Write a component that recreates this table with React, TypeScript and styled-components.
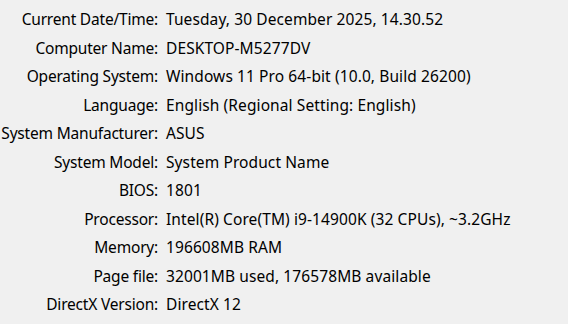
import styled, { createGlobalStyle } from "styled-components";

const GlobalStyle = createGlobalStyle`
    html, body {
        margin: 0;
        padding: 0;
        background-color: #f0f0f0;
    }
`;

const InfoGrid = styled.div`
    display: grid;
    grid-template-columns: 158px 1fr;
    column-gap: 8px;
    grid-auto-rows: 28.5px;
    align-items: center;
    padding-top: 5px;
    width: 568px;
    height: 324px;
    box-sizing: border-box;
    background-color: #f0f0f0;
    font-family: "Noto Sans", "DejaVu Sans", sans-serif;
    font-size: 15.5px;
    color: #000;
    white-space: nowrap;
`;

const Label = styled.span`
    text-align: right;
    letter-spacing: -0.2px;
`;

const Value = styled.span`
    text-align: left;
    letter-spacing: 0.1px;
`;

const rows: [string, string][] = [
    ["Current Date/Time:", "Tuesday, 30 December 2025, 14.30.52"],
    ["Computer Name:", "DESKTOP-M5277DV"],
    ["Operating System:", "Windows 11 Pro 64-bit (10.0, Build 26200)"],
    ["Language:", "English (Regional Setting: English)"],
    ["System Manufacturer:", "ASUS"],
    ["System Model:", "System Product Name"],
    ["BIOS:", "1801"],
    ["Processor:", "Intel(R) Core(TM) i9-14900K (32 CPUs), ~3.2GHz"],
    ["Memory:", "196608MB RAM"],
    ["Page file:", "32001MB used, 176578MB available"],
    ["DirectX Version:", "DirectX 12"],
];

export default function App() {
    return (
        <>
            <GlobalStyle />
            <InfoGrid>
                {rows.map(([label, value]) => (
                    <>
                        <Label key={label + "-l"}>{label}</Label>
                        <Value key={label + "-v"}>{value}</Value>
                    </>
                ))}
            </InfoGrid>
        </>
    );
}
